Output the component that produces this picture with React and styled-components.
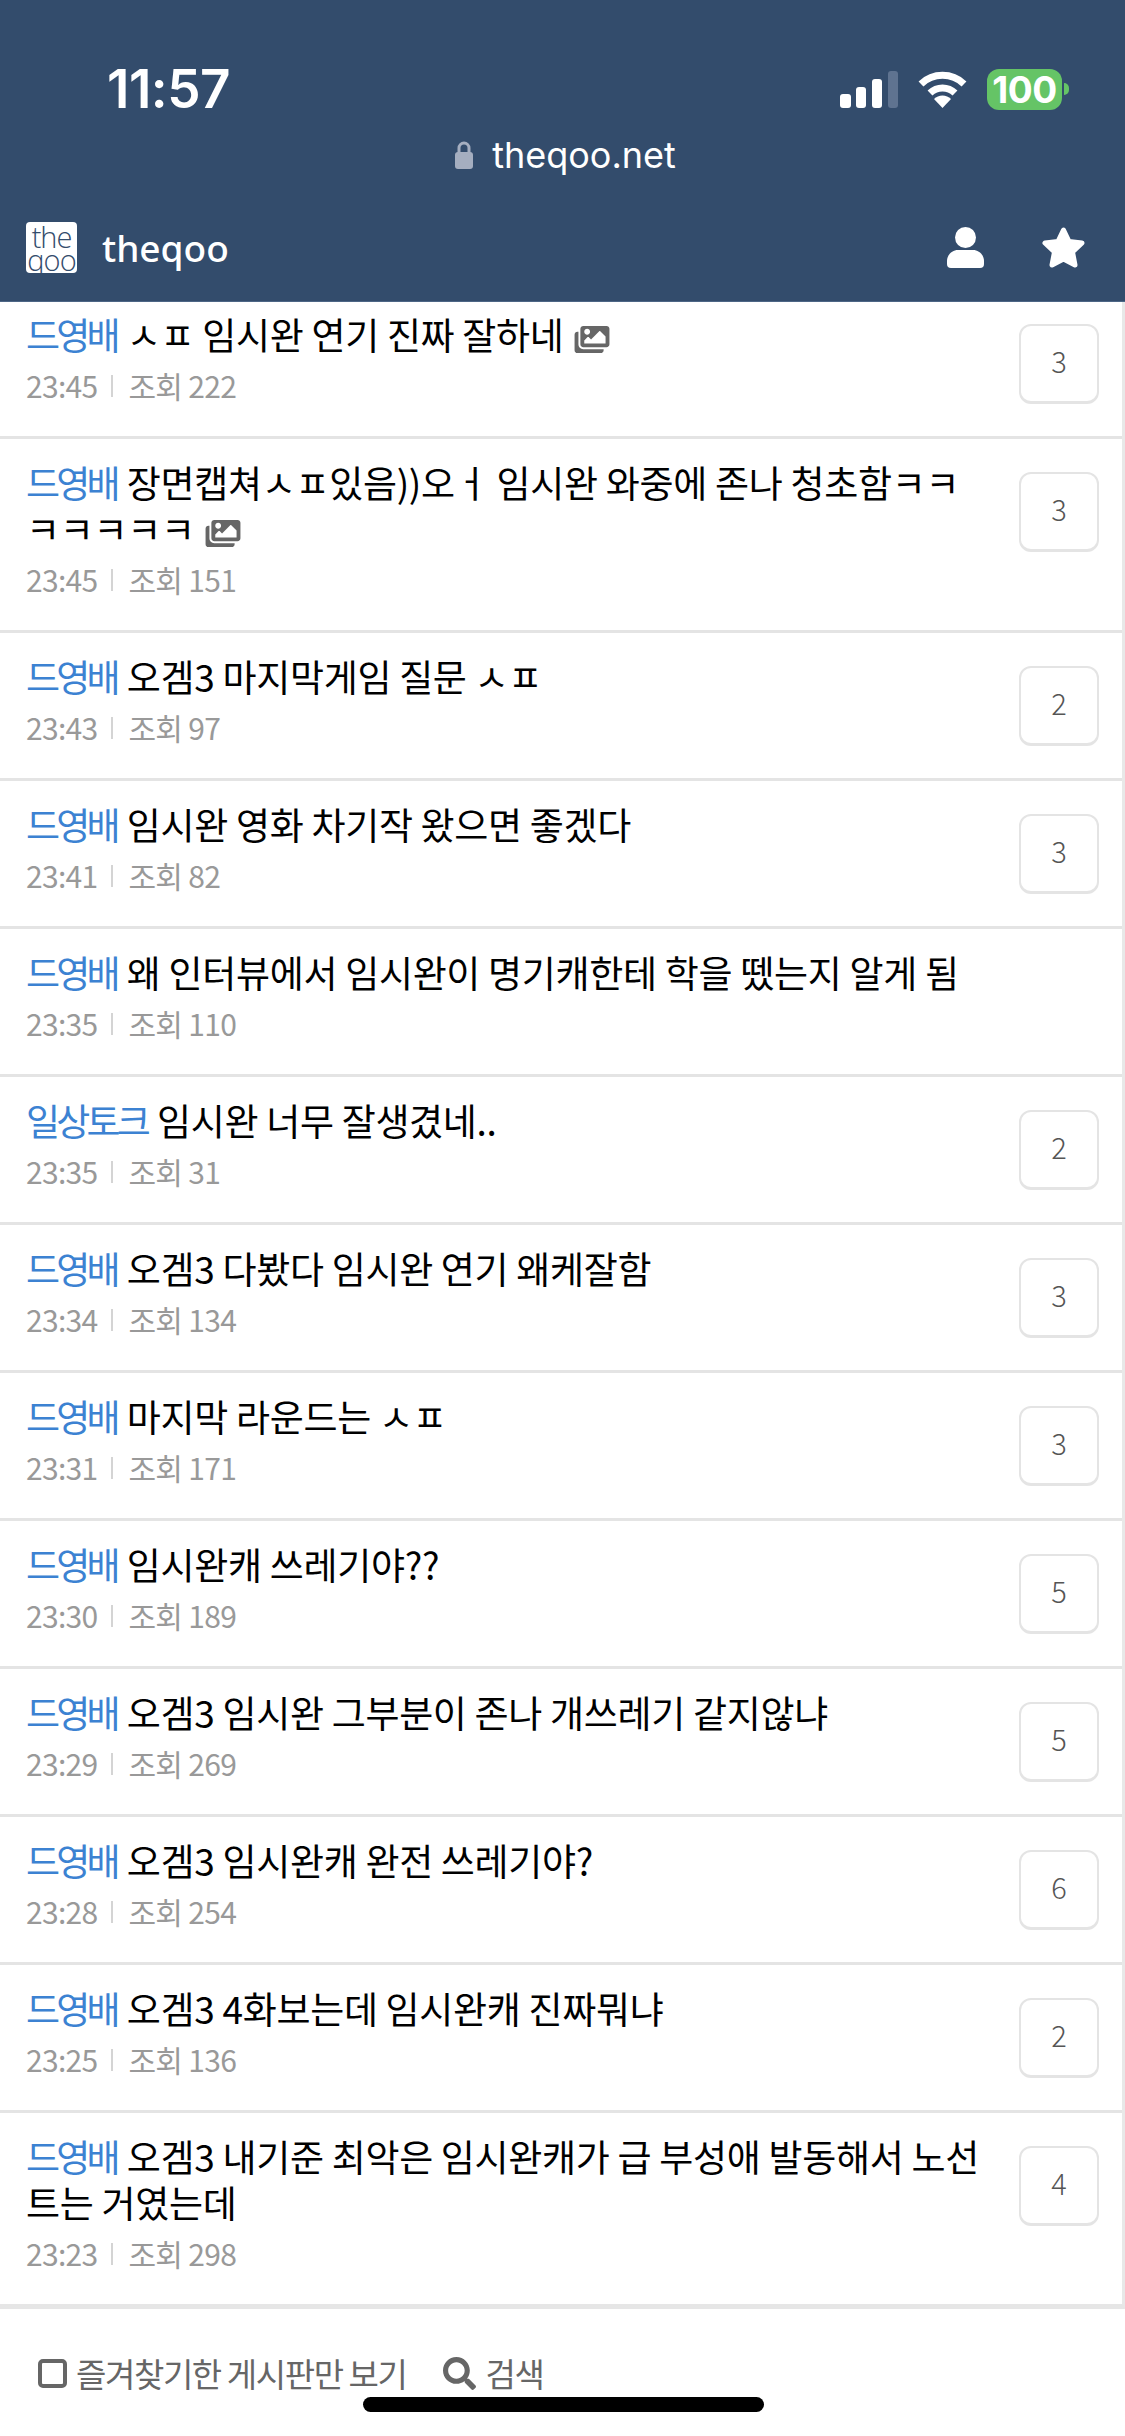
import React from 'react';
import styled, { createGlobalStyle } from 'styled-components';
import { FaImages, FaSearch } from 'react-icons/fa';

const GlobalStyle = createGlobalStyle`
    html, body {
        margin: 0;
        padding: 0;
        background: #fff;
    }
`;

const Page = styled.div`
    position: relative;
    width: 1125px;
    height: 2436px;
    overflow: hidden;
    display: flex;
    flex-direction: column;
    background: #fff;
    font-family: "Noto Sans CJK KR", "Noto Sans", sans-serif;
`;

const Header = styled.header`
    position: relative;
    z-index: 2;
    flex: none;
    height: 302px;
    box-sizing: border-box;
    display: flex;
    flex-direction: column;
    background: #334c6c;
    color: #fff;
    border-bottom: 1px solid #4d6686;
`;

const StatusBar = styled.div`
    height: 68px;
    margin-top: 55px;
    padding: 0 63px 0 107px;
    display: flex;
    align-items: center;
    justify-content: space-between;
`;

const Time = styled.div`
    font-family: Inter, sans-serif;
    font-size: 53px;
    font-weight: 600;
    letter-spacing: -0.5px;
`;

const StatusIcons = styled.div`
    display: flex;
    align-items: center;
    gap: 19px;
`;

const Battery = styled.div`
    position: relative;
    width: 75px;
    height: 41px;
    border-radius: 12px;
    background: #65c466;
    display: flex;
    align-items: center;
    justify-content: center;
    font-family: Inter, sans-serif;
    font-size: 37px;
    font-weight: 700;
    letter-spacing: -0.5px;
    &::after {
        content: '';
        position: absolute;
        left: 77px;
        top: 14px;
        width: 5px;
        height: 12px;
        border-radius: 0 6px 6px 0;
        background: #65c466;
    }
`;

const UrlBar = styled.div`
    margin-top: 7px;
    height: 50px;
    display: flex;
    align-items: center;
    justify-content: center;
    gap: 19px;
    font-family: Inter, sans-serif;
    font-size: 36px;
    padding-left: 6px;
`;

const NavBar = styled.div`
    flex: 1;
    padding: 14px 40px 0 26px;
    display: flex;
    align-items: center;
    justify-content: space-between;
`;

const Brand = styled.div`
    display: flex;
    align-items: center;
    gap: 25px;
    font-family: "Noto Sans", sans-serif;
    font-size: 37px;
    font-weight: 500;
`;

const Logo = styled.div`
    width: 51px;
    height: 51px;
    border-radius: 4px;
    background: #fff;
    color: #334c6c;
    display: flex;
    flex-direction: column;
    align-items: center;
    justify-content: center;
    font-family: "Open Sans", sans-serif;
    font-size: 29px;
    font-weight: 300;
    line-height: 23px;
    letter-spacing: -1px;
`;

const NavIcons = styled.div`
    display: flex;
    align-items: center;
    gap: 58px;
`;

const List = styled.main`
    flex: none;
    margin-top: -11px;
    border-right: 3px solid #e8e8e8;
    border-bottom: 5px solid #e6e6e6;
`;

const Row = styled.div`
    padding: 20px 23px 31px 26px;
    display: flex;
    justify-content: space-between;
    gap: 32px;
    border-bottom: 3px solid #e4e4e4;
    &:last-child {
        border-bottom: none;
    }
`;

const RowBody = styled.div`
    flex: 1;
    min-width: 0;
`;

const Title = styled.div`
    font-size: 37px;
    line-height: 46px;
    color: #000;
    letter-spacing: -0.3px;
`;

const Board = styled.span`
    color: #3c82d2;
    letter-spacing: -3.8px;
    margin-right: 2px;
`;

const ImageIcon = styled(FaImages)`
    width: 36px;
    height: 31px;
    margin-left: 10px;
    vertical-align: -5px;
    color: #666;
`;

const Meta = styled.div`
    margin-top: 8px;
    display: flex;
    align-items: center;
    font-size: 30px;
    line-height: 40px;
    color: #999;
    letter-spacing: -0.7px;
`;

const Divider = styled.span`
    width: 2px;
    height: 22px;
    margin: 2px 15px 0 14px;
    background: #d4d4d4;
`;

const CommentBox = styled.div`
    flex: none;
    box-sizing: border-box;
    width: 80px;
    height: 80px;
    margin-top: 13px;
    padding-bottom: 8px;
    border: 2px solid #e4e4e4;
    border-bottom-width: 3px;
    border-radius: 12px;
    display: flex;
    align-items: center;
    justify-content: center;
    font-size: 29px;
    font-weight: 300;
    color: #555;
`;

const Footer = styled.footer`
    padding: 42px 38px 0;
    display: flex;
    align-items: center;
    font-size: 33px;
    line-height: 44px;
    color: #666;
    letter-spacing: -1.4px;
`;

const Checkbox = styled.span`
    flex: none;
    box-sizing: border-box;
    width: 29px;
    height: 29px;
    margin-right: 9px;
    border: 4px solid #666;
    border-radius: 5px;
`;

const SearchIcon = styled(FaSearch)`
    width: 33px;
    height: 33px;
    margin: 0 10px 0 36px;
    color: #666;
`;

const HomeIndicator = styled.div`
    position: absolute;
    left: 363px;
    top: 2397px;
    width: 401px;
    height: 15px;
    border-radius: 8px;
    background: #000;
`;

const posts = [
    { board: '드영배', title: 'ㅅㅍ 임시완 연기 진짜 잘하네', image: true, time: '23:45', views: 222, count: 3 },
    { board: '드영배', title: '장면캡쳐ㅅㅍ있음))오ㅓ 임시완 와중에 존나 청초함ㅋㅋㅋㅋㅋㅋㅋ', image: true, time: '23:45', views: 151, count: 3 },
    { board: '드영배', title: '오겜3 마지막게임 질문 ㅅㅍ', time: '23:43', views: 97, count: 2 },
    { board: '드영배', title: '임시완 영화 차기작 왔으면 좋겠다', time: '23:41', views: 82, count: 3 },
    { board: '드영배', title: '왜 인터뷰에서 임시완이 명기캐한테 학을 뗐는지 알게 됨', time: '23:35', views: 110 },
    { board: '일상토크', title: '임시완 너무 잘생겼네..', time: '23:35', views: 31, count: 2 },
    { board: '드영배', title: '오겜3 다봤다 임시완 연기 왜케잘함', time: '23:34', views: 134, count: 3 },
    { board: '드영배', title: '마지막 라운드는 ㅅㅍ', time: '23:31', views: 171, count: 3 },
    { board: '드영배', title: '임시완캐 쓰레기야??', time: '23:30', views: 189, count: 5 },
    { board: '드영배', title: '오겜3 임시완 그부분이 존나 개쓰레기 같지않냐', time: '23:29', views: 269, count: 5 },
    { board: '드영배', title: '오겜3 임시완캐 완전 쓰레기야?', time: '23:28', views: 254, count: 6 },
    { board: '드영배', title: '오겜3 4화보는데 임시완캐 진짜뭐냐', time: '23:25', views: 136, count: 2 },
    { board: '드영배', title: '오겜3 내기준 최악은 임시완캐가 급 부성애 발동해서 노선트는 거였는데', time: '23:23', views: 298, count: 4 },
];

const App = () => {
    return (
        <Page>
            <GlobalStyle />
            <Header>
                <StatusBar>
                    <Time>11:57</Time>
                    <StatusIcons>
                        <svg width="58" height="37" viewBox="0 0 58 37">
                            <rect x="0" y="23" width="11" height="14" rx="3" fill="#fff" />
                            <rect x="16" y="16" width="10" height="21" rx="3" fill="#fff" />
                            <rect x="32" y="8" width="10" height="29" rx="3" fill="#fff" />
                            <rect x="48" y="0" width="10" height="37" rx="3" fill="#5f7390" />
                        </svg>
                        <svg width="51" height="37" viewBox="0 0 51 37">
                            <path d="M4 13 A31 31 0 0 1 47 13" fill="none" stroke="#fff" strokeWidth="7" />
                            <path d="M13 22 A18 18 0 0 1 38 22" fill="none" stroke="#fff" strokeWidth="7" />
                            <path d="M17 28 A12 12 0 0 1 34 28 L25.5 37 Z" fill="#fff" />
                        </svg>
                        <Battery>100</Battery>
                    </StatusIcons>
                </StatusBar>
                <UrlBar>
                    <svg width="18" height="28" viewBox="0 0 18 28">
                        <path d="M4 12 V7 A5 5 0 0 1 14 7 V12" fill="none" stroke="#a5aec0" strokeWidth="3" />
                        <rect x="0" y="11" width="18" height="17" rx="3" fill="#a5aec0" />
                    </svg>
                    <span>theqoo.net</span>
                </UrlBar>
                <NavBar>
                    <Brand>
                        <Logo>
                            <span>the</span>
                            <span>qoo</span>
                        </Logo>
                        <span>theqoo</span>
                    </Brand>
                    <NavIcons>
                        <svg width="37" height="41" viewBox="0 0 37 41">
                            <circle cx="18.5" cy="10.5" r="10.5" fill="#fff" />
                            <path d="M4 41 H33 A4 4 0 0 0 37 37 V34 C37 28 32 23 26 23 H11 C5 23 0 28 0 34 V37 A4 4 0 0 0 4 41 Z" fill="#fff" />
                        </svg>
                        <svg width="43" height="41" viewBox="0 0 43 41">
                            <path d="M21.5 3 L27 14.5 L40 16 L30.5 25 L33 38 L21.5 32 L10 38 L12.5 25 L3 16 L16 14.5 Z" fill="#fff" stroke="#fff" strokeWidth="5" strokeLinejoin="round" />
                        </svg>
                    </NavIcons>
                </NavBar>
            </Header>
            <List>
                {posts.map((post) => (
                    <Row key={post.time + post.views}>
                        <RowBody>
                            <Title>
                                <Board>{post.board}</Board> {post.title}
                                {post.image && <ImageIcon />}
                            </Title>
                            <Meta>
                                {post.time}
                                <Divider />
                                조회 {post.views}
                            </Meta>
                        </RowBody>
                        {post.count && <CommentBox>{post.count}</CommentBox>}
                    </Row>
                ))}
            </List>
            <Footer>
                <Checkbox />
                즐겨찾기한 게시판만 보기
                <SearchIcon />
                검색
            </Footer>
            <HomeIndicator />
        </Page>
    );
};

export default App;
